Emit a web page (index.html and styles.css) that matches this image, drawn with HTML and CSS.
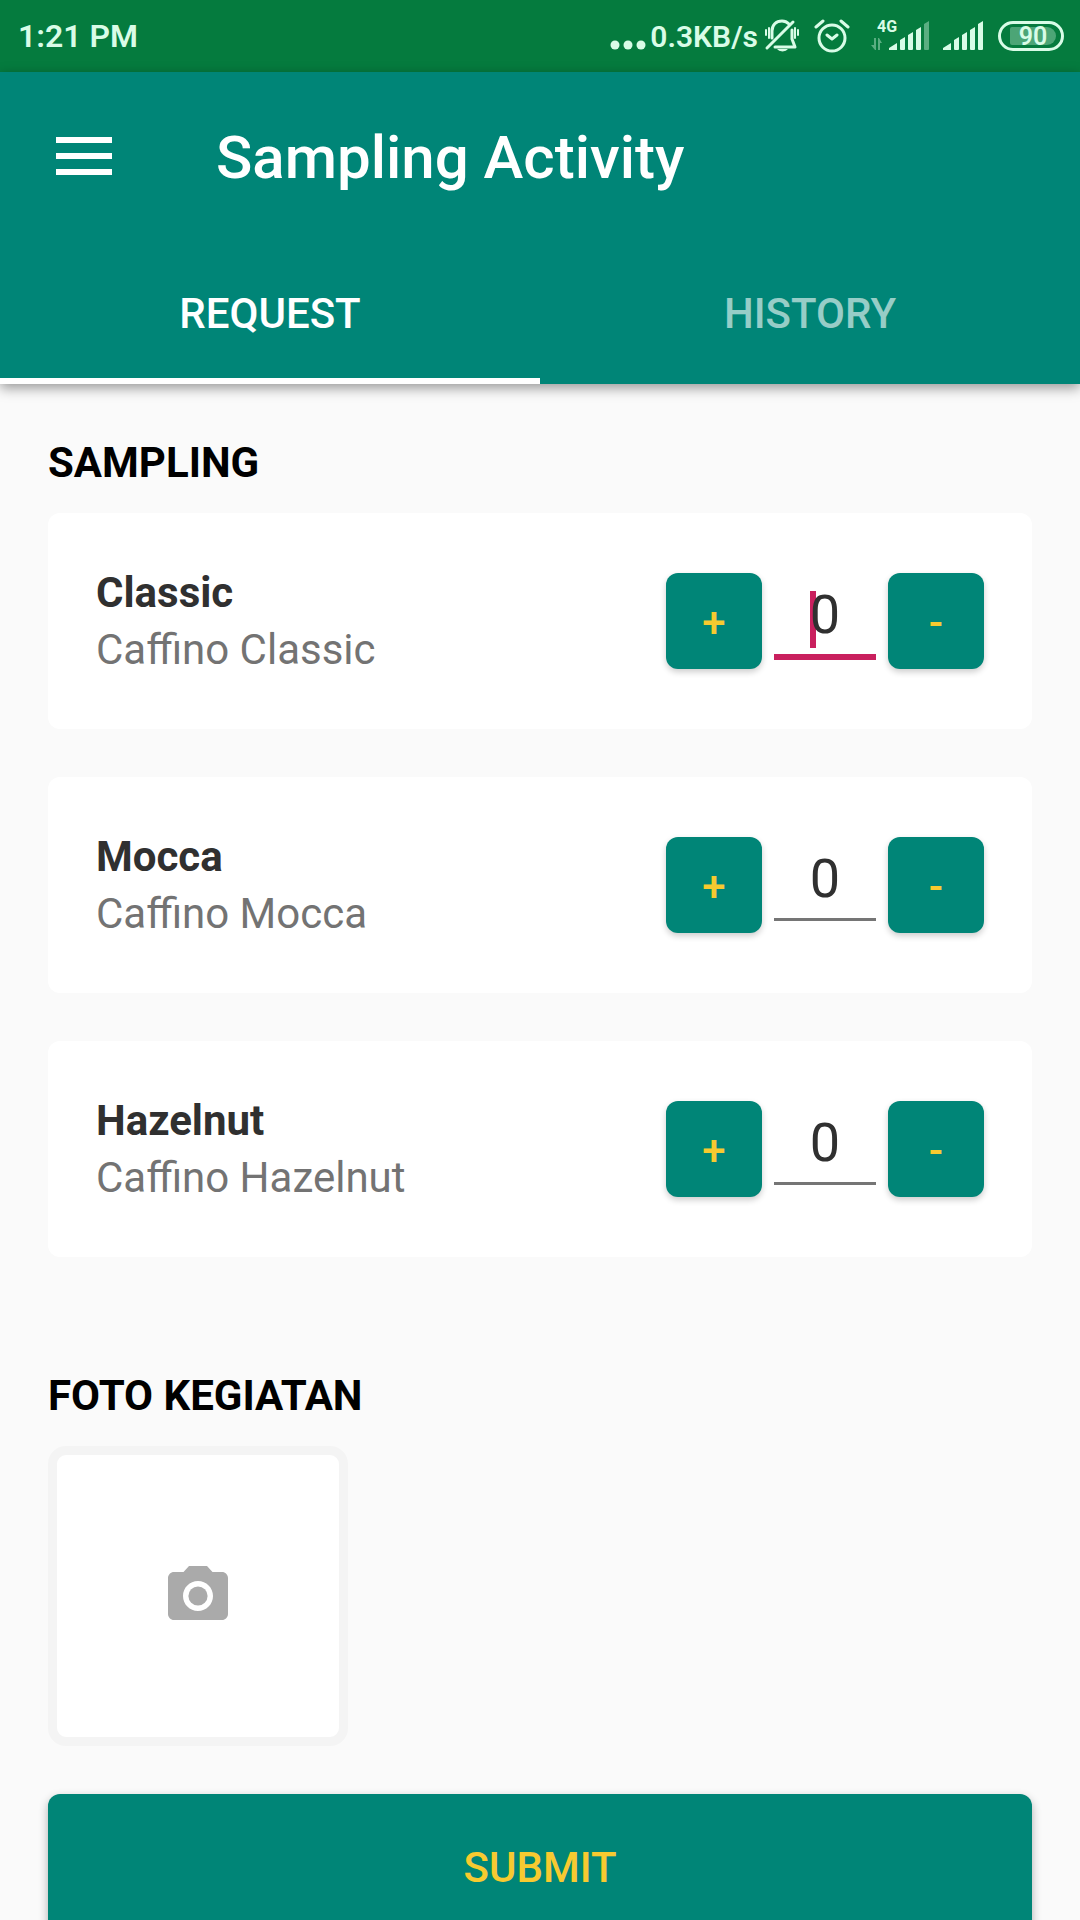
FILE: index.html
```html
<!DOCTYPE html>
<html lang="id">
<head>
<meta charset="utf-8">
<meta name="viewport" content="width=device-width, initial-scale=1">
<title>Sampling Activity</title>
<link rel="stylesheet" href="styles.css">
</head>
<body>
<div class="app">
  <div class="status">
    <span class="status-time">1:21 PM</span>
    <div class="status-right">
      <svg class="dots" viewBox="0 0 36 36" width="36" height="36" aria-hidden="true"><circle cx="5" cy="27" r="4.500"/><circle cx="18" cy="27" r="4.500"/><circle cx="31" cy="27" r="4.500"/></svg>
      <span class="speed">0.3KB/s</span>
      <svg class="bell line" viewBox="0 0 36 36" width="36" height="36" aria-hidden="true">
        <path d="M8 20V13C8 7 12 3 18 3C21 3 23 4 25 6M28 12V21L31 29H11M3 30L29 4"/>
        <path class="thin" d="M2 12V17M5 10V20M31 10V20M34 12V17"/>
        <path class="fill" d="M13 31H24A6 4 0 0 1 13 31Z"/>
      </svg>
      <svg class="alarm line" viewBox="0 0 36 36" width="36" height="36" aria-hidden="true">
        <circle cx="18" cy="20" r="13"/><path d="M2 9L9 3M27 3L34 9M13 17L18 21L23 17"/>
      </svg>
      <svg class="cell" viewBox="0 0 60 36" width="60" height="36" aria-hidden="true">
        <text x="7" y="14">4G</text>
        <path class="dim" d="M4 20H6V32H5L1 27H4ZM8 32V20H9L12 25H10V32ZM54 6L59 3V31Q59 32 58 32H55Q54 32 54 31Z"/>
        <path d="M19 32V30L27 25V32ZM30 22L35 19V31Q35 32 34 32H31Q30 32 30 31ZM38 17L43 14V31Q43 32 42 32H39Q38 32 38 31ZM46 12L51 9V31Q51 32 50 32H47Q46 32 46 31Z"/>
      </svg>
      <svg class="cell" viewBox="0 0 42 36" width="42" height="36" aria-hidden="true">
        <path d="M0 32V30L8 25V32ZM11 22L16 19V31Q16 32 15 32H12Q11 32 11 31ZM19 17L24 14V31Q24 32 23 32H20Q19 32 19 31ZM27 12L32 9V31Q32 32 31 32H28Q27 32 27 31ZM35 6L40 3V31Q40 32 39 32H36Q35 32 35 31Z"/>
      </svg>
      <div class="battery"><span class="battery-level">90</span></div>
    </div>
  </div>
  <header class="header">
    <div class="toolbar">
      <button class="menu" type="button" aria-label="Menu"><svg viewBox="0 0 56 38" width="56" height="38" aria-hidden="true"><path d="M0 0H56V6H0ZM0 16H56V22H0ZM0 32H56V38H0Z"/></svg></button>
      <h1 class="title">Sampling Activity</h1>
    </div>
    <nav class="tabs">
      <a class="tab tab-active" href="#request">REQUEST</a>
      <a class="tab" href="#history">HISTORY</a>
    </nav>
  </header>
  <main class="content" id="request">
    <h2 class="heading">SAMPLING</h2>
    <div class="cards">
      <section class="card">
        <label class="info" for="classic"><span class="name">Classic</span><span class="desc">Caffino Classic</span></label>
        <div class="stepper">
          <button class="step" type="button">+</button>
          <div class="qty qty-focused"><input id="classic" class="qty-input" type="text" inputmode="numeric" value="0"></div>
          <button class="step" type="button">-</button>
        </div>
      </section>
      <section class="card">
        <label class="info" for="mocca"><span class="name">Mocca</span><span class="desc">Caffino Mocca</span></label>
        <div class="stepper">
          <button class="step" type="button">+</button>
          <div class="qty"><input id="mocca" class="qty-input" type="text" inputmode="numeric" value="0"></div>
          <button class="step" type="button">-</button>
        </div>
      </section>
      <section class="card">
        <label class="info" for="hazelnut"><span class="name">Hazelnut</span><span class="desc">Caffino Hazelnut</span></label>
        <div class="stepper">
          <button class="step" type="button">+</button>
          <div class="qty"><input id="hazelnut" class="qty-input" type="text" inputmode="numeric" value="0"></div>
          <button class="step" type="button">-</button>
        </div>
      </section>
    </div>
    <h2 class="heading heading-photo">FOTO KEGIATAN</h2>
    <button class="photo" type="button" aria-label="Foto kegiatan">
      <svg viewBox="0 0 24 24" width="72" height="72" aria-hidden="true"><circle cx="12" cy="12" r="3.2"/><path d="M9 2L7.170 4H4c-1.100 0-2 .9-2 2v12c0 1.100.9 2 2 2h16c1.100 0 2-.9 2-2V6c0-1.100-.9-2-2-2h-3.170L15 2H9zm3 15c-2.760 0-5-2.240-5-5s2.240-5 5-5 5 2.240 5 5-2.240 5-5 5z"/></svg>
    </button>
    <button class="submit" type="submit">SUBMIT</button>
  </main>
</div>
</body>
</html>
```
FILE: styles.css
```css
* { box-sizing: border-box; }

body {
  margin: 0;
  font-family: Roboto, "Liberation Sans", sans-serif;
  font-size: 42px;
  background: #fafafa;
}

button, input { font: inherit; border: 0; padding: 0; margin: 0; }
svg { display: block; flex: none; }

.app { display: flex; flex-direction: column; height: 100vh; }

/* Status bar */
.status {
  flex: none;
  display: flex;
  justify-content: space-between;
  align-items: center;
  height: 72px;
  padding: 0 16px 0 18px;
  background: #057b3e;
  color: #d9fce7;
  font-size: 32px;
  font-weight: 600;
}
.status-right { display: flex; align-items: center; }
.status svg { fill: #d9fce7; }
.status .line { fill: none; stroke: #d9fce7; stroke-width: 3; stroke-linecap: round; stroke-linejoin: round; }
.status .line .thin { stroke-width: 2; }
.status .line .fill { fill: #d9fce7; stroke: none; }
.speed { margin: 0 6px 0 4px; font-size: 30px; }
.alarm { margin: 0 20px 0 14px; }
.cell text { font-size: 16px; font-weight: 700; }
.cell .dim { opacity: 0.4; }
.cell + .cell { margin: 0 13px; }
.battery {
  width: 66px;
  height: 30px;
  padding: 3px 5px 3px 9px;
  border: 3px solid #d9fce7;
  border-radius: 15px;
}
.battery-level {
  display: block;
  height: 18px;
  border-radius: 2px 9px 9px 2px;
  background: #4ca576;
  font-size: 25px;
  line-height: 20px;
  text-align: center;
}

/* App bar and tabs */
.header {
  flex: none;
  position: relative;
  background: #008577;
  color: #fff;
  box-shadow: 0 4px 12px rgba(0, 0, 0, 0.4);
}
.toolbar { display: flex; align-items: center; gap: 104px; height: 168px; padding: 0 56px; }
.menu { background: none; fill: #fff; }
.title { margin: 0; padding-top: 4px; font-size: 60px; line-height: 72px; font-weight: 500; }
.tabs { display: flex; height: 144px; }
.tab {
  flex: 1;
  display: flex;
  align-items: center;
  justify-content: center;
  padding-top: 2px;
  border: solid transparent;
  border-width: 6px 0;
  color: rgba(255, 255, 255, 0.6);
  font-weight: 500;
  text-decoration: none;
}
.tab-active { color: #fff; border-bottom-color: #fff; }

/* Page */
.content { flex: 1; min-height: 0; padding: 51px 48px 0; overflow: auto; scrollbar-width: none; }
.heading { margin: 0; font-size: 42px; line-height: 56px; font-weight: 700; color: #000; }
.heading-photo { margin-top: 111px; }
.cards { display: flex; flex-direction: column; gap: 48px; margin-top: 22px; }
.card {
  display: flex;
  align-items: center;
  justify-content: space-between;
  padding: 51px 48px;
  border-radius: 12px;
  background: #fff;
}
.info { display: flex; flex-direction: column; line-height: 57px; }
.name { font-weight: 700; color: #303030; }
.desc { color: #737373; }

.stepper { display: flex; gap: 12px; height: 96px; }
.step {
  width: 96px;
  padding-top: 2px;
  border-radius: 12px;
  background: #008577;
  color: #f7ca30;
  font-weight: 500;
  box-shadow: 0 3px 6px rgba(0, 0, 0, 0.2);
}
.qty { position: relative; width: 102px; height: 84px; border-bottom: 3px solid #757575; }
.qty-input {
  display: block;
  width: 100%;
  height: 81px;
  padding-top: 2px;
  background: transparent;
  color: #303030;
  font-size: 54px;
  text-align: center;
  outline: 0;
}
.qty-focused { height: 87px; border-bottom: 6px solid #c9205e; }
.qty-focused::before {
  content: "";
  position: absolute;
  left: 36px;
  top: 18px;
  width: 6px;
  height: 57px;
  background: #c9205e;
}
.qty-focused .qty-input { position: relative; }

.photo {
  display: flex;
  align-items: center;
  justify-content: center;
  width: 300px;
  height: 300px;
  margin-top: 22px;
  border: 9px solid #f4f4f4;
  border-radius: 18px;
  background: #fff;
  fill: #aaa;
}
.submit {
  display: block;
  width: 100%;
  height: 144px;
  margin-top: 48px;
  padding-top: 2px;
  border-radius: 12px;
  background: #008577;
  color: #f7ca30;
  font-weight: 500;
  box-shadow: 0 4px 10px rgba(0, 0, 0, 0.3);
}
```
